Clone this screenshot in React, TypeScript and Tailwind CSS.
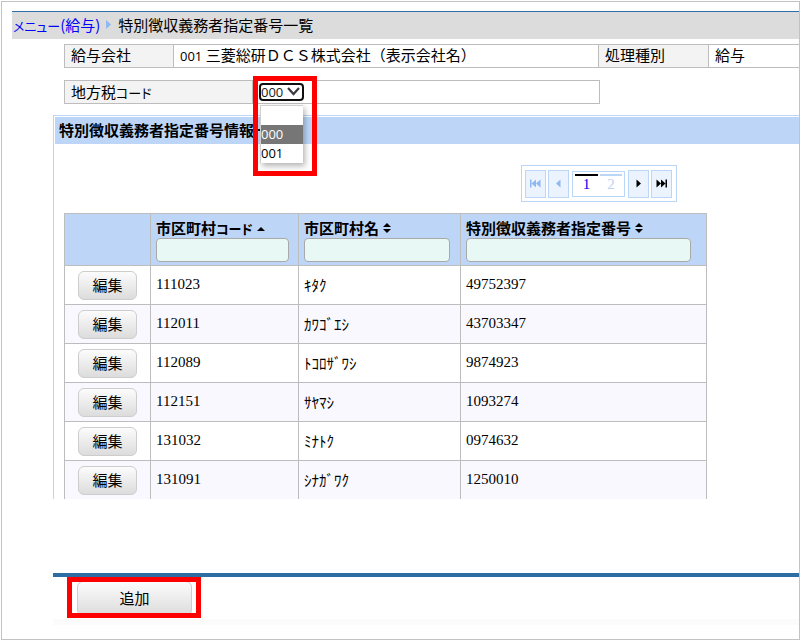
import React from "react";

const rows = [
  { code: "111023", name: "ｷﾀｸ", number: "49752397" },
  { code: "112011", name: "ｶﾜｺﾞｴｼ", number: "43703347" },
  { code: "112089", name: "ﾄｺﾛｻﾞﾜｼ", number: "9874923" },
  { code: "112151", name: "ｻﾔﾏｼ", number: "1093274" },
  { code: "131032", name: "ﾐﾅﾄｸ", number: "0974632" },
  { code: "131091", name: "ｼﾅｶﾞﾜｸ", number: "1250010" },
];

const buttonFace =
  "rounded-md border border-[#cdcdcd] bg-linear-to-b from-[#fcfcfc] to-[#dcdcdc] pb-[2px] text-center leading-5";

function Kana({ children }: { children: string }) {
  return <span className="text-[13px] leading-none [font-feature-settings:'palt']">{children}</span>;
}

function SortIcon({ both }: { both?: boolean }) {
  return (
    <svg width="8" height="10" viewBox="0 0 8 10" className="shrink-0" aria-hidden="true">
      {both ? (
        <>
          <path d="M0 4 L4 0 L8 4Z" />
          <path d="M0 6 L4 10 L8 6Z" />
        </>
      ) : (
        <path d="M0 8 L4 4 L8 8Z" />
      )}
    </svg>
  );
}

function FilterHeader({
  id,
  both,
  pad,
  children,
}: {
  id: string;
  both?: boolean;
  pad: string;
  children: React.ReactNode;
}) {
  return (
    <th scope="col" className={`border border-[#bdbdbd] pt-1 pb-[3px] pl-[5px] text-left align-top ${pad}`}>
      <div className="flex h-5 items-center gap-1">
        <label htmlFor={id} className="leading-5 whitespace-nowrap">
          {children}
        </label>
        <SortIcon both={both} />
      </div>
      <input
        id={id}
        type="text"
        className="block h-6 w-full rounded border border-[#a9a9a9] bg-[#e7f8f5] px-1 font-normal outline-none"
      />
    </th>
  );
}

function PagerButton({ label, disabled, children }: { label: string; disabled?: boolean; children: React.ReactNode }) {
  return (
    <button
      type="button"
      aria-label={label}
      disabled={disabled}
      className={`flex h-7 w-[21px] items-center justify-center border border-[#bcd6f8] bg-[#ebf4fe] ${
        disabled ? "text-[#8fb8f0]" : "text-black"
      }`}
    >
      <svg width="11" height="9" viewBox="0 0 11 9" fill="currentColor" aria-hidden="true">
        {children}
      </svg>
    </button>
  );
}

function Pager() {
  return (
    <nav aria-label="ページ" className="flex h-[37px] w-[156px] items-center border border-[#bcd6f8] px-[3px]">
      <div className="flex gap-[2px]">
        <PagerButton label="先頭" disabled>
          <path d="M0 0.5h1.5v8h-1.5z M6 0.5v8l-4.5-4z M10.5 0.5v8l-4.5-4z" />
        </PagerButton>
        <PagerButton label="前へ" disabled>
          <path d="M7.5 0.5v8l-4.5-4z" />
        </PagerButton>
      </div>
      <div className="mx-[3px] flex h-[26px] w-[53px] justify-center gap-[2px] border border-[#bcd6f8] pt-[2px] font-['Liberation_Serif',serif] text-[15px] leading-4">
        <a href="#page-1" aria-current="page" className="h-5 w-[23px] border-t-2 border-black text-center text-[#0000ee]">
          1
        </a>
        <a href="#page-2" className="h-5 w-[22px] border-t-2 border-[#bcd6f8] text-center text-[#bcd0f4]">
          2
        </a>
      </div>
      <div className="flex gap-[2px]">
        <PagerButton label="次へ">
          <path d="M3.5 0.5v8l4.5-4z" />
        </PagerButton>
        <PagerButton label="最後">
          <path d="M9.5 0.5h1.5v8h-1.5z M5 0.5v8l4.5-4z M0.5 0.5v8l4.5-4z" />
        </PagerButton>
      </div>
    </nav>
  );
}

function TaxCodeSelect() {
  return (
    <div className="relative ml-[6px]">
      <select
        id="tax-code"
        defaultValue="000"
        className="block h-[18px] w-[45px] appearance-none rounded border-2 border-[#101010] bg-white font-['Open_Sans',sans-serif] text-[13px] leading-[14px] text-[#202020] outline-none"
      >
        <option value=""></option>
        <option value="000">000</option>
        <option value="001">001</option>
      </select>
      <svg
        width="13"
        height="9"
        viewBox="0 0 13 9"
        className="pointer-events-none absolute top-[4px] right-[4px]"
        fill="none"
        stroke="#3b3b44"
        strokeWidth="2.2"
        aria-hidden="true"
      >
        <path d="M1 1 L6.5 7 L12 1" />
      </svg>
      <ul
        role="listbox"
        aria-label="地方税コード"
        className="absolute top-[22px] left-px z-10 w-[43px] border-t border-l border-[#d0d0d0] bg-white font-['Open_Sans',sans-serif] text-[13px] leading-[18px] shadow-[2px_3px_6px_rgba(0,0,0,0.3)]"
      >
        <li role="option" aria-selected="false" className="h-[19px]"></li>
        <li role="option" aria-selected="true" className="h-[19px] bg-[#767676] text-white">
          000
        </li>
        <li role="option" aria-selected="false" className="h-[19px]">
          001
        </li>
      </ul>
      <div className="pointer-events-none absolute -top-[7px] -left-[6px] z-20 h-[100px] w-16 border-[5px] border-[#ff0000]"></div>
    </div>
  );
}

export default function App() {
  return (
    <div className="flex min-h-screen bg-white p-px font-['Noto_Sans_CJK_JP',sans-serif] text-[15px] leading-[22px] text-black">
      <main className="min-w-0 flex-1 overflow-hidden border border-[#c3c3c3]">
        <nav
          aria-label="パンくず"
          className="mt-[9px] ml-[10px] flex h-7 items-center border-t border-[#2e6ea8] bg-[#dcdcdc] pb-[2px] pl-px whitespace-nowrap"
        >
          <a href="#menu" className="text-[#0000ff]">
            <Kana>メニュー</Kana>(給与)
          </a>
          <svg width="5" height="9" viewBox="0 0 5 9" className="mr-[7px] ml-[6px]" fill="#8db8f2" aria-hidden="true">
            <path d="M0 0 L5 4.5 L0 9Z" />
          </svg>
          <h1>特別徴収義務者指定番号一覧</h1>
        </nav>

        <div className="ml-[62px]">
          <table className="mt-[5px] w-full table-fixed border-collapse leading-5 whitespace-nowrap">
            <colgroup>
              <col className="w-[109px]" />
              <col className="w-[425px]" />
              <col className="w-[110px]" />
              <col />
            </colgroup>
            <tbody>
              <tr>
                <th scope="row" className="border border-[#bdbdbd] bg-[#f3f3f3] px-[6px] pb-[2px] text-left font-normal">
                  給与会社
                </th>
                <td className="border border-[#bdbdbd] px-[6px] pb-[2px]">
                  <span className="font-['Open_Sans',sans-serif] text-[13px] leading-none">001 </span>
                  三菱総研ＤＣＳ株式会社（表示会社名）
                </td>
                <th scope="row" className="border border-[#bdbdbd] bg-[#f3f3f3] px-[6px] pb-[2px] text-left font-normal">
                  処理種別
                </th>
                <td className="border-y border-[#bdbdbd] px-[6px] pb-[2px]">給与</td>
              </tr>
            </tbody>
          </table>

          <div className="mt-3 flex h-6 w-[536px] items-stretch border border-[#bdbdbd]">
            <label htmlFor="tax-code" className="w-[188px] border-r border-[#bdbdbd] bg-[#f3f3f3] pl-[6px]">
              地方税<Kana>コード</Kana>
            </label>
            <div className="flex items-center">
              <TaxCodeSelect />
            </div>
          </div>
        </div>

        <section className="mt-[11px] ml-[51px] border-t border-l border-[#bcd6f5] pt-px pl-px">
          <h2 className="h-[27px] bg-[#bdd6f8] pl-1 leading-[26px] font-bold whitespace-nowrap">
            特別徴収義務者指定番号情報一
          </h2>
          <div className="mt-[21px] ml-[466px]">
            <Pager />
          </div>
          <table className="mt-[11px] ml-[9px] w-[642px] table-fixed border-collapse">
            <colgroup>
              <col className="w-[86px]" />
              <col className="w-[148px]" />
              <col className="w-[162px]" />
              <col className="w-[246px]" />
            </colgroup>
            <thead className="bg-[#bdd6f8]">
              <tr>
                <td className="border border-[#bdbdbd]"></td>
                <FilterHeader id="filter-code" pad="pr-[9px]">
                  市区町村<Kana>コード</Kana>
                </FilterHeader>
                <FilterHeader id="filter-name" both pad="pr-[10px]">
                  市区町村名
                </FilterHeader>
                <FilterHeader id="filter-number" both pad="pr-[15px]">
                  特別徴収義務者指定番号
                </FilterHeader>
              </tr>
            </thead>
            <tbody>
              {rows.map((row) => (
                <tr key={row.code} className="border-b border-[#bdbdbd] last:border-b-0 even:bg-[#f9f8ff]">
                  <td className="border-x border-[#bdbdbd] pt-[5px] pb-1">
                    <button type="button" className={`mx-auto block h-[29px] w-[59px] ${buttonFace}`}>
                      編集
                    </button>
                  </td>
                  <td className="border-x border-[#bdbdbd] px-[5px] pb-[2px] font-['Liberation_Serif',serif]">{row.code}</td>
                  <td className="border-x border-[#bdbdbd] px-[5px]">{row.name}</td>
                  <td className="border-x border-[#bdbdbd] px-[5px] pb-[2px] font-['Liberation_Serif',serif]">{row.number}</td>
                </tr>
              ))}
            </tbody>
          </table>
        </section>

        <footer className="mt-[74px] ml-[51px] border-t-4 border-[#2e6ca4]">
          <div className="relative ml-[14px] h-[42px] w-[134px] px-[10px] pt-1">
            <button type="button" className={`block h-[35px] w-[115px] ${buttonFace}`}>
              追加
            </button>
            <div className="pointer-events-none absolute top-0 left-0 h-[41px] w-[134px] border-[5px] border-[#ff0000]"></div>
          </div>
          <div className="h-[6px] bg-[#fbfbfb]"></div>
        </footer>
      </main>
    </div>
  );
}
